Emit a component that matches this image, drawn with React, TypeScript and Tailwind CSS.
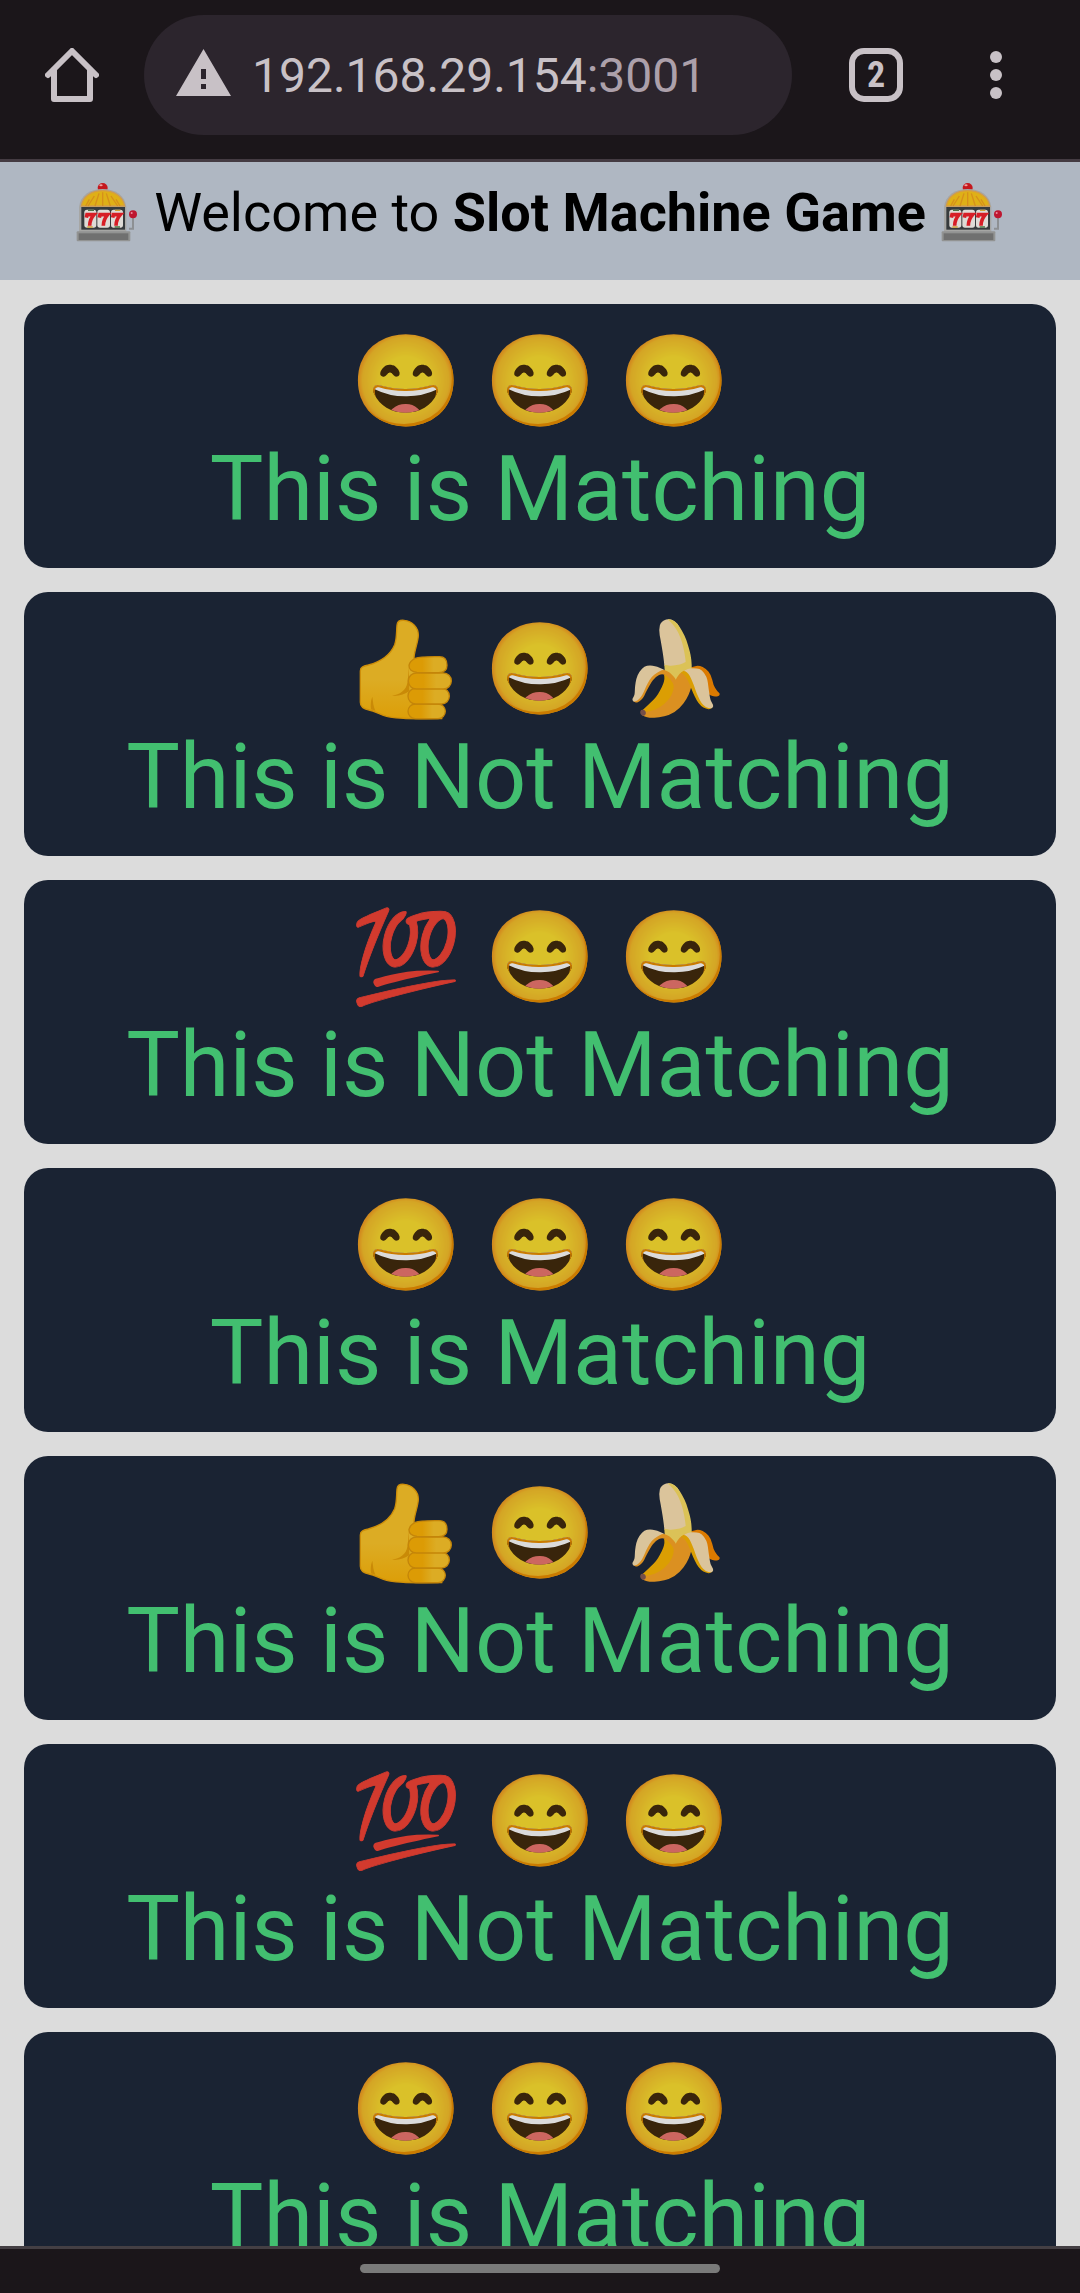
type Symbol = "smile" | "thumb" | "banana" | "hundred";

const games: { reels: Symbol[]; matching: boolean }[] = [
  { reels: ["smile", "smile", "smile"], matching: true },
  { reels: ["thumb", "smile", "banana"], matching: false },
  { reels: ["hundred", "smile", "smile"], matching: false },
  { reels: ["smile", "smile", "smile"], matching: true },
  { reels: ["thumb", "smile", "banana"], matching: false },
  { reels: ["hundred", "smile", "smile"], matching: false },
  { reels: ["smile", "smile", "smile"], matching: true },
];

const glyphs = { smile: "😄", banana: "🍌", hundred: "💯" };

function Thumb() {
  return (
    <svg viewBox="29 33 336 324" className="h-[108px] w-[112px] shrink-0" role="img" aria-label="Thumbs up">
      <defs>
        <linearGradient id="finger" x1="0" x2="1" y1="0" y2="0">
          <stop offset="0.35" stopColor="#dc9b05" />
          <stop offset="0.65" stopColor="#dcac24" />
        </linearGradient>
        <linearGradient id="palm" x1="0" x2="0" y1="0" y2="1">
          <stop offset="0.6" stopColor="#dcac24" />
          <stop offset="1" stopColor="#dc9e08" />
        </linearGradient>
      </defs>
      <path
        d="M60 198C60 186 68 184 84 180C120 170 150 150 163 119C170 99 168 80 170 60C171 49 179 45 191 46C216 48 234 68 234 90C234 110 221 140 221 160L240 200L230 320L306 341C240 342 165 342 139 334C115 328 106 319 86 315C68 312 60 305 60 292Z"
        fill="url(#palm)"
        stroke="#ce8e09"
        strokeWidth="4"
      />
      <path d="M205 186C202 225 205 246 185 260C175 268 164 270 155 273C180 274 194 266 207 259Z" fill="#c98a07" />
      <path d="M96 275C90 290 91 303 92 313L105 317C99 304 98 291 96 275Z" fill="#c98a07" />
      <g fill="url(#finger)" stroke="#c48509" strokeWidth="4">
        <rect x="203" y="297" width="112" height="44" rx="22" />
        <rect x="203" y="250" width="124" height="47" rx="23" />
        <rect x="204" y="204" width="129" height="48" rx="24" />
        <path d="M225 160C239 154 270 155 297 155C314 155 320 167 320 181C320 196 310 203 295 203L230 202C215 201 205 193 206 181C208 170 216 164 225 160Z" />
      </g>
    </svg>
  );
}

function SlotMachine() {
  return (
    <svg viewBox="42 3 201 252" className="h-[84px] w-[67px] shrink-0" role="img" aria-label="Slot machine">
      <path d="M207 176H219V140" fill="none" stroke="#8d9093" strokeWidth="6" />
      <circle cx="128" cy="54" r="15" fill="#c5171d" />
      <ellipse cx="123" cy="46" rx="5" ry="3" fill="#f0a0a0" />
      <path d="M57 111C61 76 90 57 128 57C166 57 195 76 199 111V187H57Z" fill="#a6a6a4" />
      <path d="M64 108C68 79 95 62 128 62C161 62 189 79 194 108Z" fill="#dfb017" stroke="#d39c49" strokeWidth="4" />
      <path d="M84 108L103 78M105 108L117 70M128 108V67M151 108L139 70M173 108L153 78M77 108L88 88M180 108L168 88" stroke="#d6901b" strokeWidth="4" />
      <rect x="64" y="111" width="131" height="68" fill="#373b3d" />
      <rect x="73" y="119" width="36" height="54" rx="8" fill="#dedbd6" />
      <rect x="112" y="119" width="38" height="54" rx="8" fill="#dedbd6" />
      <rect x="153" y="119" width="36" height="54" rx="8" fill="#dedbd6" />
      <path d="M84 121H102M164 171H180" stroke="#4d7546" strokeWidth="4" />
      <path d="M165 121H181M82 171H98" stroke="#d0a336" strokeWidth="4" />
      <g fill="none" stroke="#d71e26" strokeWidth="11">
        <path d="M79 143L81 134H102C95 142 89 153 89 167" />
        <path d="M118 143L120 134H143C136 142 130 153 130 167" />
        <path d="M158 143L160 134H181C174 142 168 153 168 167" />
      </g>
      <rect x="50" y="184" width="161" height="30" rx="3" fill="#929392" />
      <rect x="56" y="190" width="149" height="20" fill="#707070" />
      <circle cx="219" cy="133" r="12" fill="#be1730" />
      <circle cx="215" cy="129" r="3" fill="#ec8b9d" />
    </svg>
  );
}

function Reel({ symbol }: { symbol: Symbol }) {
  if (symbol === "thumb") return <Thumb />;
  return <span className="w-[112px] text-center brightness-[0.86]">{glyphs[symbol]}</span>;
}

function BrowserBar() {
  return (
    <nav className="flex shrink-0 items-center border-b-[3px] border-[#443b42] bg-[#1b161a] pt-[15px] pr-6 pb-6 text-[#c8c1c6]">
      <button type="button" aria-label="Home" className="flex h-[120px] w-36 items-center justify-center">
        <svg viewBox="0 0 54 54" className="size-[54px]" fill="none" stroke="currentColor" strokeWidth="6" strokeLinecap="round" strokeLinejoin="round">
          <path d="M3 27L27 3L51 27" />
          <path d="M9 22V51H45V22" />
        </svg>
      </button>
      <button
        type="button"
        aria-label="Address 192.168.29.154:3001"
        className="flex h-[120px] min-w-0 flex-1 items-center gap-[21px] rounded-full bg-[#2c252d] pl-8 text-left text-[48px] leading-[60px]"
      >
        <svg viewBox="0 0 55 48" className="mb-1 h-12 w-[55px] shrink-0" fill="currentColor">
          <path fillRule="evenodd" d="M27.500 0L55 47H0ZM25 20V30H30V20ZM25 35V40H30V35Z" />
        </svg>
        <span className="pt-0.5">
          192.168.29.154<span className="text-[#aca0aa]">:3001</span>
        </span>
      </button>
      <button type="button" aria-label="2 open tabs" className="ml-6 flex h-[120px] w-[120px] items-center justify-center">
        <span className="flex size-[54px] items-center justify-center rounded-[15px] border-[6px] border-current font-['Roboto_Condensed','Roboto'] text-[36px] leading-[42px] font-bold">
          2
        </span>
      </button>
      <button type="button" aria-label="Menu" className="flex h-[120px] w-[120px] items-center justify-center">
        <svg viewBox="0 0 12 48" className="h-12 w-3" fill="currentColor">
          <circle cx="6" cy="6" r="6" />
          <circle cx="6" cy="24" r="6" />
          <circle cx="6" cy="42" r="6" />
        </svg>
      </button>
    </nav>
  );
}

export default function App() {
  return (
    <div className="flex h-screen flex-col overflow-hidden bg-[#dcdcdc] font-['Roboto',sans-serif]">
      <BrowserBar />
      <main className="min-h-0 flex-1 overflow-hidden">
        <h1 className="flex items-center justify-center gap-[13px] bg-[#afb7c2] pt-[9px] pb-[25px] text-[54px] leading-[84px] font-normal whitespace-nowrap text-black">
          <SlotMachine />
          <span>
            Welcome to <b className="font-bold">Slot Machine Game</b>
          </span>
          <SlotMachine />
        </h1>
        <div className="flex flex-col gap-6 p-6">
          {games.map((game, i) => (
            <section key={i} className="rounded-3xl bg-[#1a2333] p-6 text-center text-[90px] leading-[108px] text-[#42bf70]">
              <div className="flex justify-center gap-[22px]">
                {game.reels.map((symbol, j) => (
                  <Reel key={j} symbol={symbol} />
                ))}
              </div>
              <p className="whitespace-nowrap">{game.matching ? "This is Matching" : "This is Not Matching"}</p>
            </section>
          ))}
        </div>
      </main>
      <footer className="flex shrink-0 justify-center border-t-[3px] border-[#443f44] bg-[#1b161a] pt-[15px] pb-5">
        <div className="h-[9px] w-1/3 rounded-full bg-[#7a7a7a]" />
      </footer>
    </div>
  );
}
